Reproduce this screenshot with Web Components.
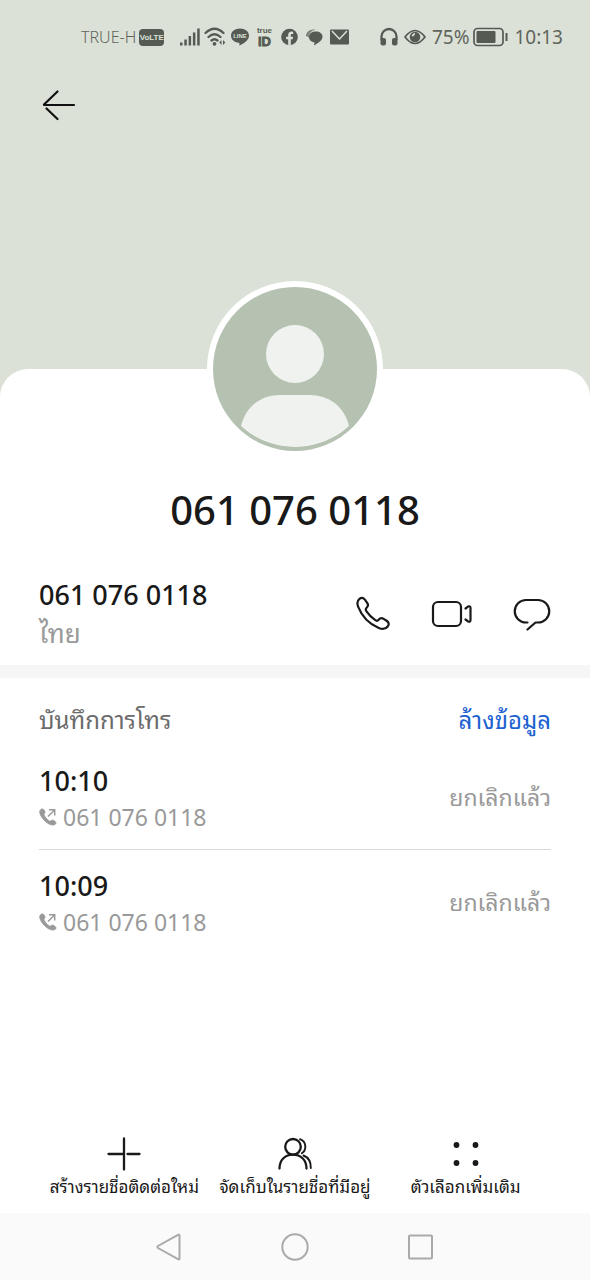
<!DOCTYPE html>
<html lang="th">
<head>
<meta charset="utf-8">
<meta name="viewport" content="width=device-width, initial-scale=1">
<title>061 076 0118</title>
<style>
  :root {
    --ink: #191919;
    --muted: #999;
    --cover: #dbe1d6;
    --link: #1c62d1;
    --side: 39px;
  }
  body {
    margin: 0;
    background: #fff;
    color: var(--ink);
    font-family: "Noto Sans", "Noto Sans Thai Looped", "Noto Sans Thai", "Open Sans", sans-serif;
  }
</style>
</head>
<body>
<contact-page>
  <status-bar slot="cover"></status-bar>
  <icon-button slot="cover" class="back" icon="back" label="ย้อนกลับ"></icon-button>
  <contact-card name="061 076 0118">
    <phone-row number="061 076 0118" region="ไทย"></phone-row>
  </contact-card>
  <call-log>
    <call-entry time="10:10" number="061 076 0118">ยกเลิกแล้ว</call-entry>
    <call-entry time="10:09" number="061 076 0118">ยกเลิกแล้ว</call-entry>
  </call-log>
  <action-bar slot="bottom">
    <action-item icon="plus">สร้างรายชื่อติดต่อใหม่</action-item>
    <action-item icon="people">จัดเก็บในรายชื่อที่มีอยู่</action-item>
    <action-item icon="dots">ตัวเลือกเพิ่มเติม</action-item>
  </action-bar>
  <system-nav slot="bottom"></system-nav>
</contact-page>

<script>
const ICONS = {
  back: [34, 32, `<g fill="none" stroke="#111" stroke-width="2.2" stroke-linecap="round"><path d="M2 16H32M2 15.500L15.500 2.500M4.500 19.500L15.500 30"/></g>`],
  signal: [20, 18, `<g fill="#555b53"><rect y="14.500" width="2.500" height="3"/><rect x="4.300" y="11.500" width="2.500" height="6"/><rect x="8.600" y="8" width="2.500" height="9.500"/><rect x="12.900" y="4.500" width="2.500" height="13"/><rect x="17.200" y="0.500" width="2.500" height="17"/></g>`],
  wifi: [22, 20, `<g fill="none" stroke="#555b53" stroke-width="2.300" stroke-linecap="round"><path d="M1.500 6Q10.500-2.500 19.500 6M4.500 10Q10.500 4.500 16.500 10M7.500 13.500Q10.500 11 13.500 13.500"/></g><circle cx="10.500" cy="16.800" r="1.900" fill="#555b53"/><path d="M17.500 13L15.300 15.500L17.500 18ZM19 13L21.300 15.500L19 18Z" fill="#555b53"/>`],
  line: [18, 18, `<path d="M9 .5C4 .5 0 3.600 0 7.700C0 11.400 3.200 14.100 7.600 14.800C9 15.100 8.400 16.200 8.300 17.500C13 15.200 18 12.200 18 7.700C18 3.600 14 .5 9 .5Z" fill="#555b53"/><text x="9" y="10" text-anchor="middle" font-family="Liberation Sans" font-weight="700" font-size="6" fill="#dbe1d6">LINE</text>`],
  trueid: [17, 22, `<g fill="#555b53" font-family="Liberation Sans" font-weight="700" text-anchor="middle"><text x="8.500" y="7" font-size="8">true</text><text x="8.500" y="20" font-size="13" stroke="#555b53" stroke-width=".8">iD</text></g>`],
  facebook: [17, 18, `<circle cx="8.500" cy="9" r="8.300" fill="#555b53"/><path d="M7.200 17.300V11.300H5.100V8.700H7.200V7C7.200 4.700 8.500 3.500 10.500 3.500L12.200 3.700V5.900H11C10 5.900 9.800 6.500 9.800 7.200V8.700H12.100L11.700 11.300H9.800V17.300Z" fill="#dbe1d6"/>`],
  chat: [17, 18, `<path d="M0 8C0 3.500 4 .8 10 1.500C5.500 2.500 3 5 2.800 9.500Z" fill="#7d847a"/><path d="M9.800 3.500C13.800 3.500 16.500 5.500 16.500 8.800C16.500 11.500 14.500 13 13 14.200L8 17.500L8.500 14.300C5.300 14.100 3 12 3 9C3 5.500 6 3.500 9.800 3.500Z" fill="#555b53"/>`],
  mail: [19, 18, `<rect y="1.500" width="19" height="15" rx="1" fill="#555b53"/><path d="M2 3L9.500 11L17 3" fill="none" stroke="#dbe1d6" stroke-width="1.500"/>`],
  headphones: [18, 20, `<path d="M1.500 13V9.500A7.500 7.500 0 0 1 16.500 9.500V13" fill="none" stroke="#555b53" stroke-width="2.300"/><rect x=".5" y="11" width="5.500" height="7.500" rx="2" fill="#555b53"/><rect x="12" y="11" width="5.500" height="7.500" rx="2" fill="#555b53"/>`],
  eye: [22, 18, `<path d="M1 9Q11-4 21 9Q11 22 1 9Z" fill="none" stroke="#555b53" stroke-width="1.700"/><circle cx="11" cy="9" r="5.300" fill="#555b53"/><path d="M11 4.800A3 3 0 0 1 7.500 8.300A4.500 4.500 0 0 1 11 4.800Z" fill="#dbe1d6"/>`],
  battery: [35, 20, `<rect x="1" y="1.500" width="29" height="17" rx="3.500" fill="none" stroke="#555b53" stroke-width="1.700"/><rect x="3.500" y="4" width="19" height="12" rx="1" fill="#555b53"/><path d="M33.500 6V14" stroke="#555b53" stroke-width="2"/>`],
  call: [36, 36, `<path d="M4.500 2.800C6.300 1.400 8.400 1.600 9.900 3.600L12.200 6.800C13.500 8.700 13.200 10.300 11.600 11.800C10.500 12.900 10.500 14 11.500 15.400C13.800 18.800 16.700 21.800 20.300 24.200C21.700 25.200 22.600 25 23.700 23.700C25 22 26.800 21.600 28.600 22.800L32 25C34 26.500 34.200 28.600 32.700 30.500C30.500 33.300 27.500 33.600 23.800 32C14.500 28 6.800 20 3.200 10.800C1.900 7.500 2 4.800 4.500 2.800Z" fill="none" stroke="#191919" stroke-width="2.200"/>`],
  video: [42, 30, `<g fill="none" stroke="#191919" stroke-width="2.200" stroke-linecap="round" stroke-linejoin="round"><rect x="2" y="3" width="28" height="24" rx="5"/><path d="M34.500 9.500L37 7.600Q39.500 6.500 39.500 9V21Q39.500 23.500 37 22.400L34.500 20.500"/></g>`],
  message: [38, 34, `<path d="M14.500 25.500H13A11 11 0 0 1 13 3H25A11 11 0 0 1 25 25.500H22.500L14.500 32.500" fill="none" stroke="#191919" stroke-width="2.200" stroke-linecap="round" stroke-linejoin="round"/>`],
  outgoing: [18, 18, `<path d="M1.500 1.800C3 .3 4.600 1 5.400 2.400C6.200 3.900 6.300 4.500 5.300 5.600C4.700 6.300 5 7.300 6.200 8.900C7.600 10.800 9 12.200 10.200 12.900C11 13.400 11.500 13 12.300 12.500C13.500 11.800 14.500 12.200 15.800 13.200C17.500 14.600 17.200 15.800 15.900 16.500C13.500 17.800 9.500 16.300 6.200 13.200C2.500 9.700-.8 4.600 1.500 1.800Z" fill="#999" stroke="#999" stroke-width=".9"/><path d="M9 8.500L15.500 2M10 1.800H15.700V7.500" fill="none" stroke="#999" stroke-width="1.500"/>`],
  plus: [34, 34, `<path d="M17 1.500V32.500M1.500 17H15M20.500 17H32.500" fill="none" stroke="#191919" stroke-width="2.300" stroke-linecap="round"/><path d="M15 17H18" stroke="#191919" stroke-width="2.300"/>`],
  people: [36, 34, `<g fill="none" stroke="#191919" stroke-width="2.300" stroke-linecap="round"><circle cx="16" cy="9.800" r="7.800"/><path d="M2.500 31.500C2.500 22.500 8.500 17.700 16 17.700S29.500 22.500 29.500 31.500"/><path d="M23 2.200C29.500 4.500 30 13 24.800 16.200M26.500 18.500C31.500 20.500 34 25 33.800 31" stroke-width="1.900"/></g>`],
  dots: [34, 34, `<g fill="#191919"><circle cx="7.500" cy="8" r="2.900"/><circle cx="26.500" cy="8" r="2.900"/><circle cx="7.500" cy="26" r="2.900"/><circle cx="26.500" cy="26" r="2.900"/></g>`],
  navback: [28, 28, `<path d="M24.500 2.500V25.500Q24.500 27 23 26.200L3 15Q1.800 14 3 13L23 1.800Q24.500 1 24.500 2.500Z" fill="none" stroke="#aaa" stroke-width="2"/>`],
  navhome: [28, 28, `<circle cx="14" cy="14" r="12.700" fill="none" stroke="#aaa" stroke-width="2"/>`],
  navrecent: [28, 28, `<rect x="2" y="2.500" width="23" height="23" rx="1" fill="none" stroke="#aaa" stroke-width="2"/>`],
  avatar: [164, 164, `<defs><clipPath id="disc"><circle cx="82" cy="78" r="82"/></clipPath></defs><circle cx="82" cy="82" r="82" fill="#b5c1b1"/><circle cx="82" cy="67" r="29" fill="#f0f2ef"/><path d="M28 139C33 119 48 108 68 108H96C116 108 131 119 136 139C106 167 58 167 28 139Z" fill="#f0f2ef" clip-path="url(#disc)"/>`]
};

class UiElement extends HTMLElement {
  connectedCallback() {
    if (this.shadowRoot) return;
    const template = document.createElement('template');
    template.innerHTML = `<style>*{box-sizing:border-box}:host{display:block}button{border:0;padding:0;margin:0;background:none;color:inherit;font:inherit}${this.styles()}</style>${this.markup()}`;
    this.attachShadow({ mode: 'open' }).append(template.content.cloneNode(true));
  }
  attr(name) { return this.getAttribute(name) || ''; }
}

customElements.define('ui-icon', class extends UiElement {
  styles() { return ':host{flex:none}svg{display:block}'; }
  markup() {
    const [w, h, body] = ICONS[this.attr('name')];
    return `<svg width="${w}" height="${h}" viewBox="0 0 ${w} ${h}" aria-hidden="true">${body}</svg>`;
  }
});

customElements.define('icon-button', class extends UiElement {
  styles() { return 'button{display:grid;place-items:center;width:100%;min-height:40px}'; }
  markup() { return `<button type="button" aria-label="${this.attr('label')}"><ui-icon name="${this.attr('icon')}"></ui-icon></button>`; }
});

customElements.define('contact-page', class extends UiElement {
  styles() { return `
    :host{display:flex;flex-direction:column;min-height:100vh}
    header{background:var(--cover);padding-bottom:272px}
    main{flex:1;background:#fff;border-radius:28px 28px 0 0;margin-top:-28px}
    ::slotted(.back){width:40px;margin-left:39px;margin-top:11px}
    `; }
  markup() { return `<header><slot name="cover"></slot></header><main><slot></slot></main><footer><slot name="bottom"></slot></footer>`; }
});

customElements.define('status-bar', class extends UiElement {
  styles() { return `
    :host{display:flex;align-items:center;height:74px;padding:0 27px 0 81px;color:#5f655d;font-size:19px}
    .group{display:flex;align-items:center}
    .network{gap:3px;margin-right:13px}
    .carrier{font-size:16px;font-weight:300}
    .volte{width:25px;border-radius:4px;background:#555b53;color:var(--cover);font:700 8px/17px "Liberation Sans",sans-serif;text-align:center}
    .apps{display:grid;grid-auto-flow:column;grid-auto-columns:25px;place-items:center}
    .device{margin-left:auto;gap:6px}
    .power{display:flex;align-items:center;gap:4px}`; }
  markup() {
    const icons = names => names.map(n => `<ui-icon name="${n}"></ui-icon>`).join('');
    return `<div class="group network"><span class="carrier">TRUE-H</span><span class="volte">VoLTE</span></div>
      <div class="apps">${icons(['signal', 'wifi', 'line', 'trueid', 'facebook', 'chat', 'mail'])}</div>
      <div class="group device">${icons(['headphones', 'eye'])}<span class="power">75%<ui-icon name="battery"></ui-icon></span><time>10:13</time></div>`;
  }
});

customElements.define('contact-card', class extends UiElement {
  styles() { return `
    .avatar{width:176px;margin:-88px auto 0;padding:6px;border-radius:50%;background:#fff}
    h1{margin:25px 0 38px;font-size:40px;line-height:56px;font-weight:500;text-align:center}`; }
  markup() { return `<div class="avatar"><ui-icon name="avatar"></ui-icon></div><h1>${this.attr('name')}</h1><slot></slot>`; }
});

customElements.define('phone-row', class extends UiElement {
  styles() { return `
    :host{display:flex;justify-content:space-between;align-items:center;padding:0 var(--side) 13px}
    .number{font-size:27px;line-height:38px;font-weight:500}
    .region{font-size:26px;line-height:38px;color:var(--muted)}
    .actions{display:flex;gap:40px}
    icon-button{flex:none}`; }
  markup() { return `
    <div><div class="number">${this.attr('number')}</div><div class="region">${this.attr('region')}</div></div>
    <div class="actions"><icon-button icon="call" label="โทร"></icon-button><icon-button icon="video" label="วิดีโอคอล"></icon-button><icon-button icon="message" label="ข้อความ"></icon-button></div>`; }
});

customElements.define('call-log', class extends UiElement {
  styles() { return `
    :host{border-top:13px solid #f6f6f6;padding:22px var(--side) 0}
    header{display:flex;justify-content:space-between;margin-bottom:5px;font-size:24px;line-height:40px}
    h2{margin:0;font-size:24px;font-weight:400;line-height:40px;color:#6b6b6b}
    button{color:var(--link)}
    ::slotted(call-entry:not(:last-child)){border-bottom:1px solid #d9d9d9}`; }
  markup() { return `<header><h2>บันทึกการโทร</h2><button type="button">ล้างข้อมูล</button></header><slot></slot>`; }
});

customElements.define('call-entry', class extends UiElement {
  styles() { return `
    :host{display:flex;justify-content:space-between;align-items:center;padding:18px 0 14px;color:var(--muted);font-size:23px;line-height:36px}
    time{display:block;color:var(--ink);font-size:27px;font-weight:500}
    .number{display:flex;align-items:center;gap:6px}
    .result{padding-bottom:4px}`; }
  markup() { return `<div><time>${this.attr('time')}</time><div class="number"><ui-icon name="outgoing"></ui-icon>${this.attr('number')}</div></div><span class="result"><slot></slot></span>`; }
});

customElements.define('action-bar', class extends UiElement {
  styles() { return ':host{display:grid;grid-template-columns:repeat(3,1fr);padding:0 39px 13px}'; }
  markup() { return '<slot></slot>'; }
});

customElements.define('action-item', class extends UiElement {
  styles() { return 'button{display:flex;flex-direction:column;align-items:center;gap:3px;width:100%;font-size:17px;line-height:26px;white-space:nowrap}'; }
  markup() { return `<button type="button"><ui-icon name="${this.attr('icon')}"></ui-icon><span><slot></slot></span></button>`; }
});

customElements.define('system-nav', class extends UiElement {
  styles() { return ':host{display:grid;grid-template-columns:repeat(3,1fr);align-items:center;height:67px;padding:0 18%;background:#fafafa}'; }
  markup() { return `<icon-button icon="navback" label="กลับ"></icon-button><icon-button icon="navhome" label="หน้าหลัก"></icon-button><icon-button icon="navrecent" label="ล่าสุด"></icon-button>`; }
});
</script>
</body>
</html>
